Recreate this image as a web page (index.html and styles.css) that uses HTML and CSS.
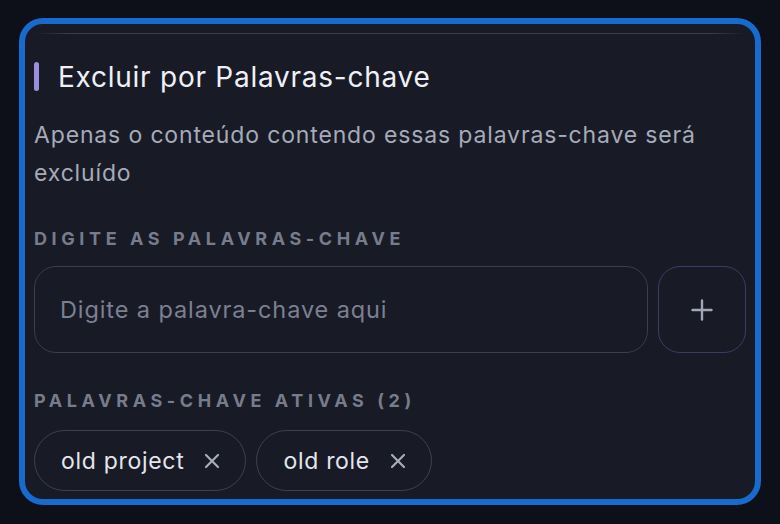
FILE: index.html
```html
<!DOCTYPE html>
<html lang="pt-BR">
<head>
    <meta charset="UTF-8">
    <meta name="viewport" content="width=device-width, initial-scale=1.0">
    <title>Excluir por Palavras-chave</title>
    <link rel="stylesheet" href="styles.css">
</head>
<body>
    <div class="page">
        <div class="card">
            <div class="divider"></div>
            <section class="keyword-section">
                <h2 class="section-title"><span class="title-bar"></span>Excluir por Palavras-chave</h2>
                <p class="section-desc">Apenas o conteúdo contendo essas palavras-chave será excluído</p>

                <div class="field-label">Digite as palavras-chave</div>
                <div class="input-row">
                    <input type="text" class="keyword-input" placeholder="Digite a palavra-chave aqui">
                    <button type="button" class="add-button" aria-label="Adicionar">
                        <svg width="22" height="22" viewBox="0 0 22 22" fill="none" stroke="currentColor" stroke-width="2.4" stroke-linecap="round">
                            <path d="M11 1.5v19M1.5 11h19"/>
                        </svg>
                    </button>
                </div>

                <div class="field-label active-label">Palavras-chave ativas (2)</div>
                <div class="chips">
                    <span class="chip">old project
                        <svg class="chip-x" width="16" height="16" viewBox="0 0 16 16" fill="none" stroke="currentColor" stroke-width="2.2" stroke-linecap="round">
                            <path d="M2 2l12 12M14 2L2 14"/>
                        </svg>
                    </span>
                    <span class="chip">old role
                        <svg class="chip-x" width="16" height="16" viewBox="0 0 16 16" fill="none" stroke="currentColor" stroke-width="2.2" stroke-linecap="round">
                            <path d="M2 2l12 12M14 2L2 14"/>
                        </svg>
                    </span>
                </div>
            </section>
        </div>
    </div>
</body>
</html>
```

FILE: styles.css
```css
body {
    margin: 0;
    background-color: #0e1019;
    font-family: Inter, "Noto Sans", sans-serif;
}

.page {
    padding: 18px 19px 19px 19px;
}

.card {
    height: 475px;
    border: 6px solid #176bcc;
    border-radius: 24px;
    background-color: #181a26;
    overflow: hidden;
    padding: 0 9px;
}

.divider {
    height: 1px;
    margin-top: 9px;
    background: linear-gradient(90deg, rgba(58, 61, 74, 0), #3a3d4a 5%, #3a3d4a 95%, rgba(58, 61, 74, 0));
}

.section-title {
    display: flex;
    align-items: center;
    gap: 19px;
    margin: 28px 0 0 0;
    height: 29px;
    font-size: 28px;
    font-weight: 400;
    letter-spacing: 0.75px;
    color: #eef0f6;
}

.title-bar {
    width: 5px;
    height: 29px;
    border-radius: 3px;
    background-color: #9b8fdc;
}

.section-desc {
    margin: 25px 0 0 0;
    font-size: 23px;
    line-height: 38px;
    letter-spacing: 0.85px;
    color: #a6abb9;
    max-width: 700px;
}

.field-label {
    margin-top: 35px;
    font-size: 18px;
    line-height: 24px;
    font-weight: 700;
    letter-spacing: 4.6px;
    text-transform: uppercase;
    color: #777c8c;
}

.active-label {
    margin-top: 36px;
}

.input-row {
    display: flex;
    gap: 10px;
    margin-top: 15px;
}

.keyword-input {
    flex: 1;
    height: 87px;
    box-sizing: border-box;
    border: 1.5px solid #3b3e4c;
    border-radius: 22px;
    background: transparent;
    padding: 0 25px;
    font-family: inherit;
    font-size: 23.5px;
    letter-spacing: 0.9px;
    color: #e4e6ed;
    outline: none;
}

.keyword-input::placeholder {
    color: #7b8092;
}

.add-button {
    width: 88px;
    height: 87px;
    box-sizing: border-box;
    border: 1.5px solid #3c3b68;
    border-radius: 22px;
    background: transparent;
    color: #a2a6b6;
    display: flex;
    align-items: center;
    justify-content: center;
    padding: 0;
    cursor: pointer;
}

.chips {
    display: flex;
    gap: 10px;
    margin-top: 17px;
}

.chip {
    display: inline-flex;
    align-items: center;
    gap: 20px;
    height: 61px;
    box-sizing: border-box;
    padding: 0 25px 0 26px;
    border: 1.5px solid #3e414f;
    border-radius: 31px;
    font-size: 23px;
    letter-spacing: 0.7px;
    color: #e4e6ed;
}

.chip-x {
    color: #a8acba;
}
```
